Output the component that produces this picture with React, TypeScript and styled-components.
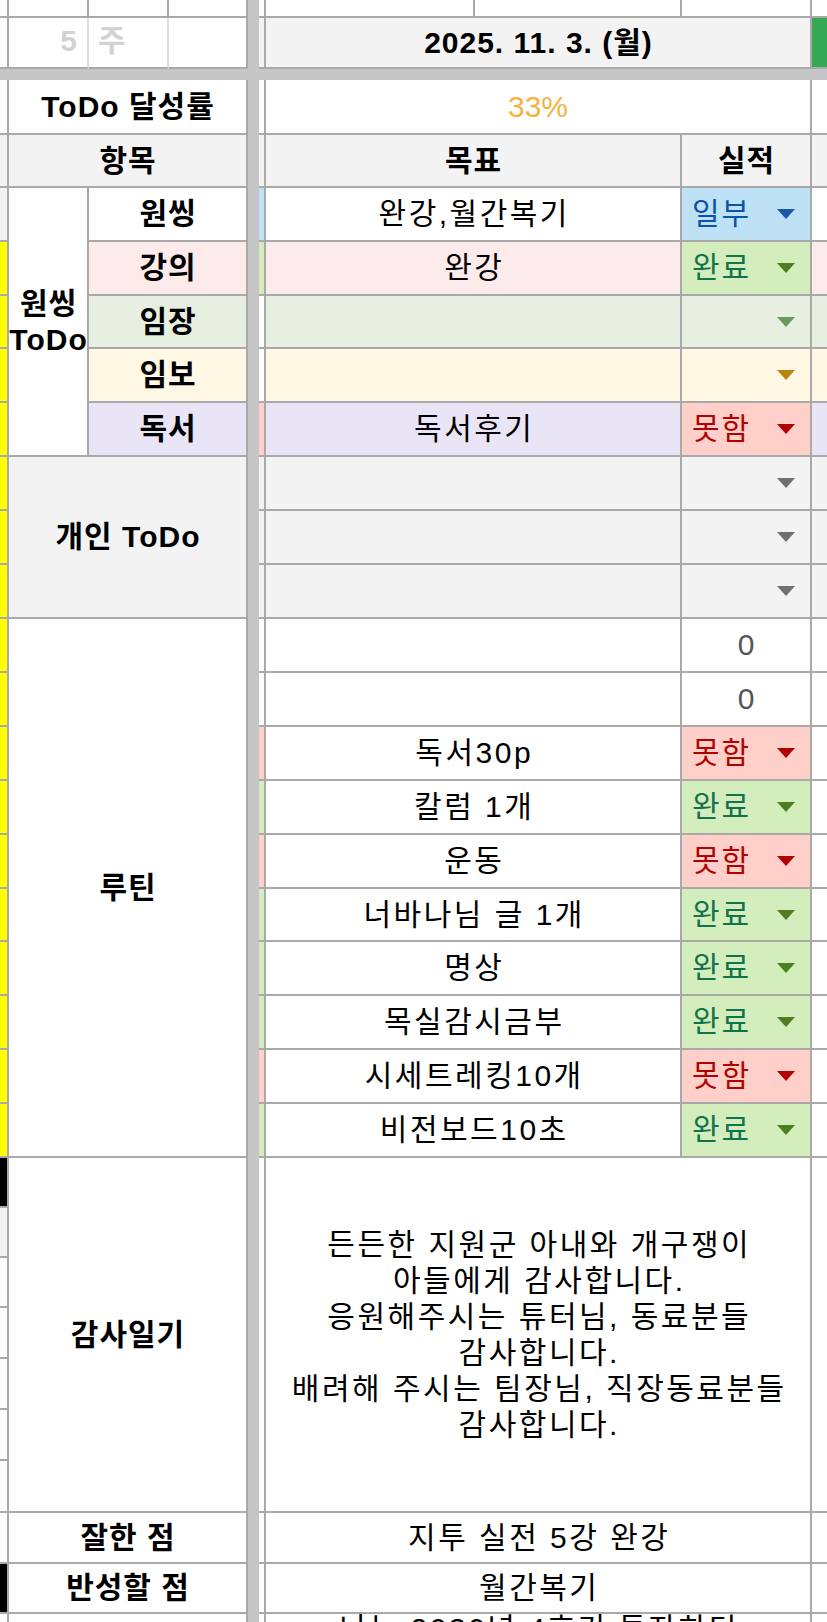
import React from "react";
import styled, { createGlobalStyle } from "styled-components";

const LINE = "#a9a9a9";
const SOFT_LINE = "#dedede";
const SEP = "#c6c6c6";
const GRAY = "#f3f3f3";
const YELLOW = "#ffff00";

const GlobalStyle = createGlobalStyle`
  html, body { margin: 0; padding: 0; background: #ffffff; }
  body {
    width: 827px;
    height: 1622px;
    overflow: hidden;
    font-family: "Liberation Sans", "Noto Sans CJK KR", sans-serif;
  }
`;

const COLS = "9px 80px 80px 79px 11px 7px 209px 207px 130px 15px";
const ROW_HEIGHTS = [
  18, 51, 11, 55, 53,
  54, 54, 53, 54, 54,
  54, 54, 54,
  54, 54, 54, 54, 54, 53, 54, 54, 54, 54,
  50, 50, 50, 51, 51, 51, 52,
  51, 50, 51,
];

const Sheet = styled.div`
  display: grid;
  grid-template-columns: ${COLS};
  grid-template-rows: ${ROW_HEIGHTS.map((h) => `${h}px`).join(" ")};
  width: 827px;
`;

type CellProps = {
  $col: string;
  $row: string;
  $bg?: string;
  $noRight?: boolean;
  $soft?: boolean;
  $justify?: "center" | "flex-start" | "flex-end";
  $alignTop?: boolean;
};

const Cell = styled.div<CellProps>`
  grid-column: ${(p) => p.$col};
  grid-row: ${(p) => p.$row};
  box-sizing: border-box;
  min-width: 0;
  overflow: hidden;
  background: ${(p) => p.$bg ?? "#ffffff"};
  border-right: ${(p) => (p.$noRight ? "none" : `2px solid ${p.$soft ? SOFT_LINE : LINE}`)};
  border-bottom: 2px solid ${LINE};
  display: flex;
  align-items: ${(p) => (p.$alignTop ? "flex-start" : "center")};
  justify-content: ${(p) => p.$justify ?? "center"};
  text-align: center;
  font-size: 30px;
  line-height: 36px;
  letter-spacing: 2.5px;
  padding-left: 2.5px;
  color: #000000;
  white-space: nowrap;
`;

const Label = styled(Cell)`
  font-weight: 700;
  letter-spacing: 1px;
  padding-left: 1px;
`;

const WeekMark = styled(Cell)`
  font-weight: 700;
  letter-spacing: 0;
  color: #d2d2d2;
  padding: 0 10px 4px 9px;
`;

const DateHeader = styled(Cell)`
  font-weight: 700;
  letter-spacing: 1px;
  padding-left: 1px;
`;

const Rate = styled(Cell)`
  color: #f5b33e;
  letter-spacing: 0;
  padding-left: 0;
`;

const Note = styled(Cell)`
  line-height: 30px;
`;

const VSep = styled.div`
  grid-column: 5;
  grid-row: 1 / -1;
  background: ${SEP};
`;

const HSep = styled.div`
  grid-column: 1 / -1;
  grid-row: 3;
  background: ${SEP};
`;

const Lines = styled.div`
  display: flex;
  flex-direction: column;
  align-items: center;
  line-height: 36px;
`;

const StatusBox = styled.div<{ $row: string; $bg: string; $empty: boolean }>`
  grid-column: 9;
  grid-row: ${(p) => p.$row};
  box-sizing: border-box;
  background: ${(p) => p.$bg};
  border-right: 2px solid ${LINE};
  border-bottom: 2px solid ${LINE};
  display: flex;
  align-items: center;
  justify-content: ${(p) => (p.$empty ? "flex-end" : "space-between")};
  padding: 0 15px 0 10px;
  font-size: 30px;
  line-height: 36px;
  letter-spacing: 2px;
`;

const StatusText = styled.span<{ $color: string }>`
  color: ${(p) => p.$color};
`;

const Caret = styled.span<{ $color: string }>`
  width: 0;
  height: 0;
  border-left: 9px solid transparent;
  border-right: 9px solid transparent;
  border-top: 10px solid ${(p) => p.$color};
`;

const Count = styled(Cell)`
  color: #555555;
  letter-spacing: 0;
  padding-left: 0;
`;

type StatusKey = "일부" | "완료" | "못함";

const STATUS: Record<StatusKey, { bg: string; fg: string; caret: string }> = {
  일부: { bg: "#bfe1f6", fg: "#0a53a8", caret: "#1a5aa6" },
  완료: { bg: "#d4edbc", fg: "#11734b", caret: "#4f7d22" },
  못함: { bg: "#ffcfc9", fg: "#b10202", caret: "#b10202" },
};

const tr = (i: number) => `${i} / ${i + 1}`;

type OneThingRow = {
  label: string;
  fill: string;
  goal: string;
  status?: StatusKey;
  caret?: string;
};

const ONE_THING: OneThingRow[] = [
  { label: "원씽", fill: "#ffffff", goal: "완강,월간복기", status: "일부" },
  { label: "강의", fill: "#fdeaea", goal: "완강", status: "완료" },
  { label: "임장", fill: "#e6efe0", goal: "", caret: "#6b9a57" },
  { label: "임보", fill: "#fef8e5", goal: "", caret: "#b8860b" },
  { label: "독서", fill: "#e9e5f6", goal: "독서후기", status: "못함" },
];

type RoutineRow = { goal: string; status?: StatusKey; value?: string };

const ROUTINES: RoutineRow[] = [
  { goal: "", value: "0" },
  { goal: "", value: "0" },
  { goal: "독서30p", status: "못함" },
  { goal: "칼럼 1개", status: "완료" },
  { goal: "운동", status: "못함" },
  { goal: "너바나님 글 1개", status: "완료" },
  { goal: "명상", status: "완료" },
  { goal: "목실감시금부", status: "완료" },
  { goal: "시세트레킹10개", status: "못함" },
  { goal: "비전보드10초", status: "완료" },
];

const GRATITUDE = [
  "든든한 지원군 아내와 개구쟁이",
  "아들에게 감사합니다.",
  "응원해주시는 튜터님, 동료분들",
  "감사합니다.",
  "배려해 주시는 팀장님, 직장동료분들",
  "감사합니다.",
];

// column A fills by row track (track 3 is the frozen separator)
const COL_A: Record<number, string> = {
  1: "#ffffff", 2: "#ffffff", 4: "#ffffff", 5: GRAY, 6: GRAY,
  24: "#000000", 25: GRAY, 26: "#ffffff", 27: "#ffffff", 28: "#ffffff",
  29: "#ffffff", 30: "#ffffff", 31: "#ffffff", 32: "#000000", 33: "#ffffff",
};
for (let i = 7; i <= 23; i++) COL_A[i] = YELLOW;

function Status({ row, status, fill, caret }: { row: number; status?: StatusKey; fill: string; caret: string }) {
  if (!status) {
    return (
      <StatusBox $row={tr(row)} $bg={fill} $empty>
        <Caret $color={caret} />
      </StatusBox>
    );
  }
  const s = STATUS[status];
  return (
    <StatusBox $row={tr(row)} $bg={s.bg} $empty={false}>
      <StatusText $color={s.fg}>{status}</StatusText>
      <Caret $color={s.caret} />
    </StatusBox>
  );
}

export default function App() {
  const colA = Object.entries(COL_A).map(([k, bg]) => (
    <Cell key={`a${k}`} $col="1" $row={tr(Number(k))} $bg={bg} />
  ));

  return (
    <>
      <GlobalStyle />
      <Sheet>
        {colA}
        <VSep />
        <HSep />

        {/* top partial row */}
        <Cell $col="2" $row={tr(1)} />
        <Cell $col="3" $row={tr(1)} />
        <Cell $col="4" $row={tr(1)} />
        <Cell $col="6" $row={tr(1)} />
        <Cell $col="7" $row={tr(1)} />
        <Cell $col="8" $row={tr(1)} />
        <Cell $col="9" $row={tr(1)} />
        <Cell $col="10" $row={tr(1)} $noRight />

        {/* date row */}
        <WeekMark $col="2" $row={tr(2)} $soft $justify="flex-end">5</WeekMark>
        <WeekMark $col="3" $row={tr(2)} $soft $justify="flex-start">주</WeekMark>
        <Cell $col="4" $row={tr(2)} />
        <Cell $col="6" $row={tr(2)} $bg={GRAY} />
        <DateHeader $col="7 / 10" $row={tr(2)} $bg={GRAY}>2025. 11. 3. (월)</DateHeader>
        <Cell $col="10" $row={tr(2)} $bg="#34a853" $noRight />

        {/* achievement rate */}
        <Label $col="2 / 5" $row={tr(4)}>ToDo 달성률</Label>
        <Cell $col="6" $row={tr(4)} />
        <Rate $col="7 / 10" $row={tr(4)}>33%</Rate>
        <Cell $col="10" $row={tr(4)} $noRight />

        {/* header */}
        <Label $col="2 / 5" $row={tr(5)} $bg={GRAY}>항목</Label>
        <Cell $col="6" $row={tr(5)} $bg={GRAY} />
        <Label $col="7 / 9" $row={tr(5)} $bg={GRAY}>목표</Label>
        <Label $col="9" $row={tr(5)} $bg={GRAY}>실적</Label>
        <Cell $col="10" $row={tr(5)} $bg={GRAY} $noRight />

        {/* one thing group */}
        <Label $col="2" $row="6 / 11">
          <Lines>
            <span>원씽</span>
            <span>ToDo</span>
          </Lines>
        </Label>
        {ONE_THING.map((r, i) => {
          const row = 6 + i;
          return (
            <React.Fragment key={r.label}>
              <Label $col="3 / 5" $row={tr(row)} $bg={r.fill}>{r.label}</Label>
              <Cell $col="6" $row={tr(row)} $bg={r.status ? STATUS[r.status].bg : "#ffffff"} />
              <Cell $col="7 / 9" $row={tr(row)} $bg={r.fill}>{r.goal}</Cell>
              <Status row={row} status={r.status} fill={r.fill} caret={r.caret ?? "#000"} />
              <Cell $col="10" $row={tr(row)} $bg={r.fill} $noRight />
            </React.Fragment>
          );
        })}

        {/* personal todo */}
        <Label $col="2 / 5" $row="11 / 14" $bg={GRAY}>개인 ToDo</Label>
        {[11, 12, 13].map((row) => (
          <React.Fragment key={row}>
            <Cell $col="6" $row={tr(row)} $bg={GRAY} />
            <Cell $col="7 / 9" $row={tr(row)} $bg={GRAY} />
            <Status row={row} fill={GRAY} caret="#707070" />
            <Cell $col="10" $row={tr(row)} $bg={GRAY} $noRight />
          </React.Fragment>
        ))}

        {/* routines */}
        <Label $col="2 / 5" $row="14 / 24">루틴</Label>
        {ROUTINES.map((r, i) => {
          const row = 14 + i;
          return (
            <React.Fragment key={row}>
              <Cell $col="6" $row={tr(row)} $bg={r.status ? STATUS[r.status].bg : "#ffffff"} />
              <Cell $col="7 / 9" $row={tr(row)}>{r.goal}</Cell>
              {r.status ? (
                <Status row={row} status={r.status} fill="#ffffff" caret="#000" />
              ) : (
                <Count $col="9" $row={tr(row)}>{r.value}</Count>
              )}
              <Cell $col="10" $row={tr(row)} $noRight />
            </React.Fragment>
          );
        })}

        {/* gratitude */}
        <Label $col="2 / 5" $row="24 / 31">감사일기</Label>
        <Cell $col="6" $row="24 / 31" />
        <Cell $col="7 / 10" $row="24 / 31">
          <Lines>
            {GRATITUDE.map((line, i) => (
              <span key={i}>{line}</span>
            ))}
          </Lines>
        </Cell>
        <Cell $col="10" $row="24 / 31" $noRight />

        {/* good / reflect */}
        <Label $col="2 / 5" $row={tr(31)}>잘한 점</Label>
        <Cell $col="6" $row={tr(31)} />
        <Cell $col="7 / 10" $row={tr(31)}>지투 실전 5강 완강</Cell>
        <Cell $col="10" $row={tr(31)} $noRight />

        <Label $col="2 / 5" $row={tr(32)}>반성할 점</Label>
        <Cell $col="6" $row={tr(32)} />
        <Cell $col="7 / 10" $row={tr(32)}>월간복기</Cell>
        <Cell $col="10" $row={tr(32)} $noRight />

        <Cell $col="2 / 5" $row={tr(33)} />
        <Cell $col="6" $row={tr(33)} />
        <Note $col="7 / 10" $row={tr(33)} $alignTop>나는 2030년 4호기 투자하던</Note>
        <Cell $col="10" $row={tr(33)} $noRight />
      </Sheet>
    </>
  );
}
